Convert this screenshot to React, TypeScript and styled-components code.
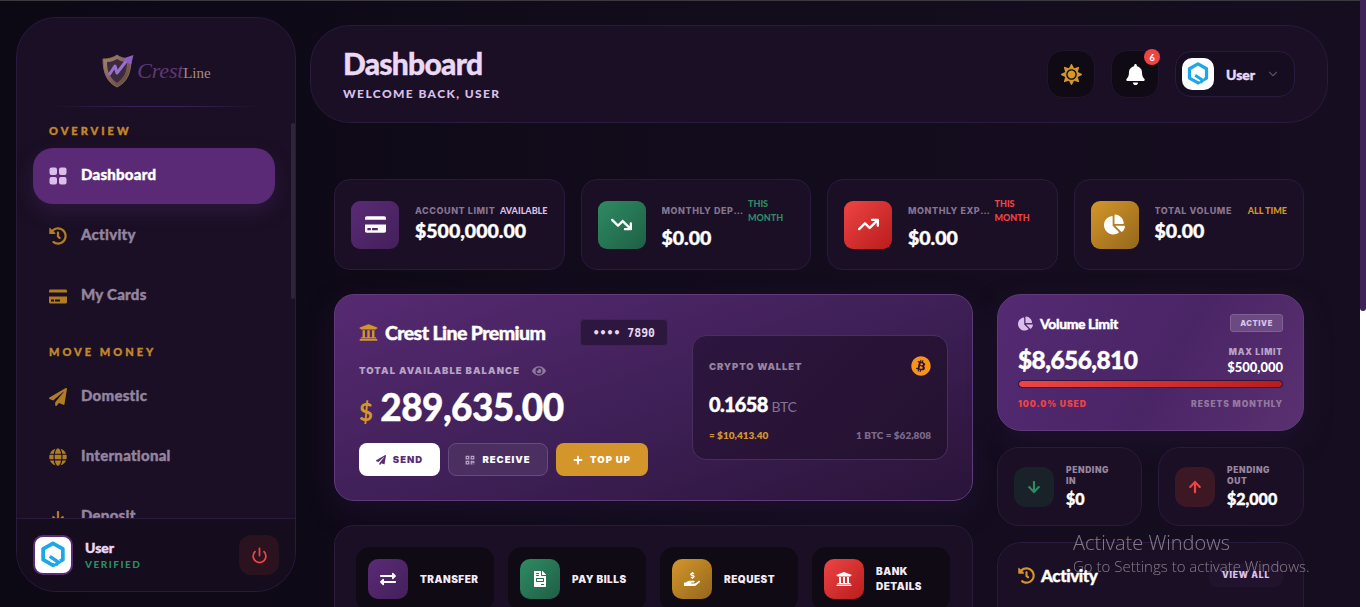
import React from "react";
import styled, { createGlobalStyle, css } from "styled-components";
import { ChevronDown, Power } from "lucide-react";
import {
  FaArrowDown,
  FaArrowUp,
  FaBell,
  FaBitcoin,
  FaChartPie,
  FaCreditCard,
  FaExchangeAlt,
  FaEye,
  FaFileInvoice,
  FaGlobe,
  FaHandHoldingUsd,
  FaHistory,
  FaPaperPlane,
  FaPlus,
  FaQrcode,
  FaSun,
  FaUniversity,
} from "react-icons/fa";
import { FaArrowTrendDown, FaArrowTrendUp } from "react-icons/fa6";

const FONT = `"Lato", "Inter", sans-serif`;
const WIDE = `"Inter", "Lato", sans-serif`;

const gold = "#d4962a";
const green = "#2e8b63";
const red = "#ef4444";
const purple = "#5b2a76";

const gradients: Record<string, string> = {
  purple: "linear-gradient(135deg, #5b2a76, #43205a)",
  green: "linear-gradient(135deg, #2e8b63, #1f5f45)",
  red: "linear-gradient(135deg, #ef4444, #b91c1c)",
  gold: "linear-gradient(135deg, #d4962a, #94671c)",
};

// The reference text is heavier than the installed fonts go
const heavy = css`
  -webkit-text-stroke: 0.4px currentColor;
`;

const GlobalStyle = createGlobalStyle`
  html, body {
    margin: 0;
    height: 100%;
    overflow: hidden;
    background: #0f0a18;
    font-family: ${FONT};
  }
  * { box-sizing: border-box; }
`;

const Page = styled.div`
  display: flex;
  height: 607px;
  padding-left: 16px;
  border-top: 1px solid #3b3b3f;
  background: linear-gradient(90deg, #0c0814 0%, #130c1d 60%, #160e20 100%);
  overflow: hidden;
`;

// Sidebar
const Sidebar = styled.aside`
  position: relative;
  flex: 0 0 280px;
  height: 575px;
  margin-top: 16px;
  display: flex;
  flex-direction: column;
  background: #1a0f24;
  border: 1px solid #2a1a3d;
  border-radius: 40px;
  overflow: hidden;
`;

const LogoArea = styled.div`
  flex: 0 0 90px;
  position: relative;
  display: flex;
  align-items: center;
  justify-content: center;
  padding: 16px 0 0 0;
  &::after {
    content: "";
    position: absolute;
    left: 32px;
    right: 32px;
    bottom: 1px;
    height: 1px;
    background: linear-gradient(90deg, transparent, #3d2257 40%, #3d2257 60%, transparent);
  }
`;

const LogoText = styled.span`
  font-family: "Liberation Serif", serif;
  font-size: 15px;
  line-height: 1;
  margin-left: 2px;
  color: #a98b7c;
`;

const LogoScript = styled.span`
  font-size: 22px;
  font-style: italic;
  color: #5d3a77;
  letter-spacing: -0.2px;
`;

const SideScroll = styled.div`
  position: absolute;
  top: 105px;
  right: 0;
  width: 4px;
  height: 176px;
  border-radius: 2px;
  background: #2f2439;
`;

const Nav = styled.nav`
  flex: 1;
  min-height: 0;
  overflow: hidden;
  padding: 16px 20px 0 16px;
`;

const SectionLabel = styled.div<{ $gap?: number }>`
  font-family: ${FONT};
  font-size: 11px;
  font-weight: 900;
  line-height: 14px;
  letter-spacing: 3px;
  color: ${gold};
  opacity: 0.9;
  padding-left: 16px;
  margin: ${(p) => p.$gap ?? 0}px 0 10px;
  ${heavy}
`;

const NavItem = styled.div<{ $active?: boolean }>`
  display: flex;
  align-items: center;
  gap: 14px;
  height: 56px;
  margin-bottom: 4px;
  padding-left: 16px;
  border-radius: 20px;
  font-size: 15px;
  font-weight: 900;
  letter-spacing: 0.25px;
  color: ${(p) => (p.$active ? "#ffffff" : "#93849f")};
  background: ${(p) => (p.$active ? purple : "transparent")};
  box-shadow: ${(p) => (p.$active ? "0 8px 20px rgba(91, 42, 118, 0.3)" : "none")};
  ${heavy}
`;

const NavLabel = styled.span`
  margin-top: -4px;
`;

const NavIcon = styled.span<{ $active?: boolean }>`
  display: flex;
  align-items: center;
  justify-content: center;
  width: 18px;
  font-size: 18px;
  color: ${(p) => (p.$active ? "#d9bfe9" : "#b07d24")};
`;

const SideFooter = styled.div`
  flex: 0 0 73px;
  display: flex;
  align-items: center;
  gap: 12px;
  padding: 0 16px;
  background: #150c1e;
  border-top: 1px solid #2a1a3d;
`;

const Avatar = styled.div<{ $ring?: boolean; $size: number }>`
  flex: 0 0 auto;
  display: flex;
  align-items: center;
  justify-content: center;
  width: ${(p) => p.$size}px;
  height: ${(p) => p.$size}px;
  border-radius: 10px;
  background: #fff;
  border: ${(p) => (p.$ring ? `2px solid ${purple}` : "none")};
`;

const FooterText = styled.div`
  flex: 1;
`;

const FooterName = styled.div`
  font-size: 14px;
  font-weight: 900;
  line-height: 18px;
  color: #ead9f5;
  ${heavy}
`;

const Verified = styled.div`
  font-size: 10px;
  font-weight: 900;
  line-height: 14px;
  letter-spacing: 1.5px;
  color: ${green};
`;

const PowerButton = styled.div`
  display: flex;
  align-items: center;
  justify-content: center;
  width: 40px;
  height: 40px;
  border-radius: 12px;
  color: ${red};
  background: #2a121f;
`;

// Main column
const Main = styled.main`
  flex: 0 0 1018px;
  margin-left: 14px;
  padding-top: 24px;
  min-width: 0;
`;

const Header = styled.header`
  display: flex;
  align-items: center;
  justify-content: space-between;
  height: 98px;
  padding: 0 32px;
  background: #1a0f24;
  border: 1px solid #2a1a3d;
  border-radius: 40px;
`;

const Title = styled.h1`
  margin: 0;
  font-family: ${FONT};
  font-size: 30px;
  font-weight: 900;
  line-height: 32px;
  letter-spacing: -0.75px;
  color: #ead9f5;
  ${heavy}
`;

const Subtitle = styled.div`
  margin-top: 7px;
  font-size: 12px;
  font-weight: 900;
  line-height: 16px;
  letter-spacing: 1.4px;
  color: #d9bfe9;
`;

const HeaderActions = styled.div`
  display: flex;
  align-items: center;
  gap: 16px;
`;

const RoundButton = styled.div<{ $color: string }>`
  position: relative;
  display: flex;
  align-items: center;
  justify-content: center;
  width: 48px;
  height: 48px;
  border-radius: 16px;
  font-size: 21px;
  color: ${(p) => p.$color};
  background: #0f0a14;
  border: 1px solid #21152e;
`;

const Badge = styled.span`
  position: absolute;
  top: -2px;
  right: -2px;
  display: flex;
  align-items: center;
  justify-content: center;
  width: 16px;
  height: 16px;
  border-radius: 50%;
  font-size: 9px;
  font-weight: 900;
  color: #fff;
  background: ${red};
`;

const UserPill = styled.div`
  display: flex;
  align-items: center;
  width: 120px;
  height: 46px;
  padding: 0 14px 0 6px;
  border: 1px solid #2a1a3d;
  border-radius: 16px;
  background: #170d20;
`;

const UserName = styled.span`
  flex: 1;
  margin-left: 12px;
  font-size: 14px;
  font-weight: 900;
  color: #ead9f5;
  ${heavy}
`;

const Content = styled.div`
  padding: 56px 24px 0;
`;

const StatsRow = styled.section`
  display: grid;
  grid-template-columns: repeat(4, 1fr);
  gap: 16px;
`;

const StatCard = styled.div`
  display: flex;
  align-items: center;
  gap: 16px;
  height: 91px;
  padding: 0 16px;
  background: #1a0f24;
  border: 1px solid #2a1a3d;
  border-radius: 16px;
  min-width: 0;
`;

const StatIcon = styled.div<{ $tone: string }>`
  flex: 0 0 48px;
  display: flex;
  align-items: center;
  justify-content: center;
  height: 48px;
  border-radius: 9px;
  font-size: 21px;
  color: #fff;
  background: ${(p) => gradients[p.$tone]};
`;

const StatBody = styled.div`
  flex: 1;
  min-width: 0;
  padding-bottom: 3px;
`;

const StatHead = styled.div`
  display: flex;
  align-items: center;
  justify-content: space-between;
  gap: 4px;
`;

const StatLabel = styled.span`
  min-width: 0;
  overflow: hidden;
  white-space: nowrap;
  text-overflow: ellipsis;
  font-family: ${WIDE};
  font-size: 9px;
  font-weight: 800;
  letter-spacing: 0.55px;
  color: #85748f;
`;

const StatTag = styled.span<{ $color: string; $wrap?: boolean }>`
  flex: ${(p) => (p.$wrap ? "0 0 46px" : "0 0 auto")};
  font-size: 9px;
  font-weight: 900;
  line-height: 14px;
  color: ${(p) => p.$color};
`;

const StatValue = styled.div`
  font-size: 19.5px;
  font-weight: 900;
  line-height: 24px;
  margin-top: 1px;
  color: #fff;
  ${heavy}
`;

const Columns = styled.section`
  display: grid;
  grid-template-columns: 639px 307px;
  gap: 24px;
  margin-top: 24px;
  align-items: start;
`;

const LeftColumn = styled.div`
  display: flex;
  flex-direction: column;
  gap: 24px;
`;

const RightColumn = styled.div`
  display: flex;
  flex-direction: column;
  gap: 16px;
`;

const Hero = styled.div`
  display: flex;
  align-items: center;
  gap: 24px;
  padding: 24px;
  border: 1px solid #5f3b7a;
  border-radius: 20px;
  background: linear-gradient(160deg, #572a72 0%, #3d1f55 55%, #2a1439 100%);
  box-shadow: 0 10px 30px rgba(60, 30, 90, 0.25);
`;

const HeroLeft = styled.div`
  flex: 0 0 309px;
`;

const HeroTop = styled.div`
  display: flex;
  align-items: center;
  justify-content: space-between;
  height: 27px;
`;

const HeroTitle = styled.div`
  display: flex;
  align-items: center;
  gap: 7px;
  font-size: 19.5px;
  font-weight: 900;
  letter-spacing: -0.6px;
  color: #fff;
  ${heavy}
  svg {
    font-size: 19px;
    color: ${gold};
  }
`;

const CardNumber = styled.div`
  display: flex;
  align-items: center;
  height: 27px;
  padding: 0 12px;
  border-radius: 4px;
  font-family: "DejaVu Sans Mono", monospace;
  font-size: 11.5px;
  font-weight: 700;
  white-space: pre;
  color: #e6d8ef;
  background: #2e173f;
  border: 1px solid #3e2553;
`;

const BalanceLabel = styled.div`
  display: flex;
  align-items: center;
  gap: 12px;
  margin-top: 17px;
  font-family: ${WIDE};
  font-size: 9.5px;
  font-weight: 900;
  line-height: 16px;
  letter-spacing: 1.05px;
  color: #b7a3c5;
  svg {
    font-size: 14px;
    color: #8e7a9e;
  }
`;

const Balance = styled.div`
  display: flex;
  align-items: baseline;
  gap: 8px;
  margin-top: 6px;
  font-size: 37px;
  font-weight: 900;
  line-height: 44px;
  letter-spacing: -0.6px;
  color: #fff;
  ${heavy}
`;

const Currency = styled.span`
  font-size: 24px;
  font-weight: 700;
  color: ${gold};
  -webkit-text-stroke: 0;
`;

const HeroButtons = styled.div`
  display: flex;
  gap: 8px;
  margin-top: 9px;
`;

const HeroButton = styled.div<{ $kind: "light" | "ghost" | "gold" }>`
  display: flex;
  align-items: center;
  justify-content: center;
  gap: 7px;
  width: ${(p) => ({ light: 81, ghost: 100, gold: 92 })[p.$kind]}px;
  height: 33px;
  border-radius: 8px;
  font-family: ${WIDE};
  font-size: 9.5px;
  font-weight: 900;
  letter-spacing: 1px;
  color: ${(p) => (p.$kind === "light" ? purple : "#fff")};
  background: ${(p) =>
    ({ light: "#fff", ghost: "#4c2f61", gold: gold })[p.$kind]};
  border: ${(p) => (p.$kind === "ghost" ? "1px solid #694a80" : "none")};
  svg {
    font-size: 10px;
  }
`;

const GhostIcon = styled.span`
  display: flex;
  color: #b7a3c5;
`;

const Wallet = styled.div`
  flex: 0 0 256px;
  height: 125px;
  padding: 21px 16px 0;
  border: 1px solid #47305c;
  border-radius: 14px;
  background: linear-gradient(135deg, #2d163f, #24112f);
`;

const WalletHead = styled.div`
  display: flex;
  align-items: center;
  justify-content: space-between;
  height: 18px;
  font-family: ${WIDE};
  font-size: 9.5px;
  font-weight: 900;
  letter-spacing: 0.85px;
  color: #95859f;
  svg {
    font-size: 20px;
    color: #f7931a;
  }
`;

const WalletAmount = styled.div`
  margin-top: 16px;
  font-size: 20px;
  font-weight: 900;
  line-height: 26px;
  letter-spacing: -0.7px;
  color: #fff;
  ${heavy}
  small {
    margin-left: 4px;
    font-size: 14px;
    font-weight: 400;
    letter-spacing: -0.4px;
    color: #83748e;
    -webkit-text-stroke: 0;
  }
`;

const WalletFoot = styled.div`
  display: flex;
  justify-content: space-between;
  margin-top: 8px;
  font-size: 10px;
  font-weight: 800;
  line-height: 14px;
`;

const ActionsCard = styled.div`
  display: grid;
  grid-template-columns: repeat(4, 138px);
  gap: 14px;
  padding: 21px;
  background: #1a0f24;
  border: 1px solid #2a1a3d;
  border-radius: 20px;
`;

const ActionTile = styled.div`
  display: flex;
  align-items: center;
  gap: 12px;
  height: 64px;
  padding: 0 12px;
  border-radius: 14px;
  background: #0f0a14;
`;

const ActionIcon = styled.div<{ $tone: string }>`
  flex: 0 0 40px;
  display: flex;
  align-items: center;
  justify-content: center;
  height: 40px;
  border-radius: 10px;
  font-size: 16px;
  color: #fff;
  background: ${(p) => gradients[p.$tone]};
`;

const ActionLabel = styled.span`
  font-family: ${WIDE};
  font-size: 10px;
  font-weight: 900;
  line-height: 15px;
  letter-spacing: 0.5px;
  color: #f3ecf8;
`;

const VolumeCard = styled.div`
  height: 137px;
  padding: 19px 20px 0;
  border: 1px solid #5f3b7a;
  border-radius: 24px;
  background: linear-gradient(120deg, #542a72 0%, #4a2566 55%, #5a3070 100%);
  box-shadow: 0 10px 30px rgba(60, 30, 90, 0.25);
`;

const VolumeHead = styled.div`
  display: flex;
  align-items: center;
  justify-content: space-between;
  height: 18px;
`;

const VolumeTitle = styled.div`
  display: flex;
  align-items: center;
  gap: 7px;
  font-size: 14px;
  font-weight: 900;
  letter-spacing: -0.4px;
  color: #fff;
  ${heavy}
  svg {
    font-size: 15px;
    color: #d9bfe9;
  }
`;

const ActiveTag = styled.span`
  display: flex;
  align-items: center;
  justify-content: center;
  width: 53px;
  height: 18px;
  border-radius: 3px;
  font-family: ${WIDE};
  font-size: 7.5px;
  font-weight: 900;
  letter-spacing: 0.6px;
  color: #d9bfe9;
  background: #6a4a80;
  border: 1px solid #7f6194;
`;

const VolumeMid = styled.div`
  display: flex;
  align-items: flex-end;
  justify-content: space-between;
  margin-top: 13px;
`;

const VolumeValue = styled.div`
  font-size: 24.5px;
  font-weight: 900;
  line-height: 30px;
  letter-spacing: -0.6px;
  color: #fff;
  ${heavy}
`;

const MaxLimit = styled.div`
  text-align: right;
  font-size: 13px;
  font-weight: 900;
  line-height: 15px;
  color: #fff;
  span {
    display: block;
    font-family: ${WIDE};
    font-size: 8.5px;
    font-weight: 900;
    letter-spacing: 0.8px;
    color: #b7a3c5;
  }
`;

const BarTrack = styled.div`
  height: 8px;
  margin-top: 5px;
  border-radius: 4px;
  border: 1px solid #2d1540;
  background: #2d1540;
  overflow: hidden;
`;

const BarFill = styled.div`
  height: 100%;
  background: linear-gradient(90deg, #ef4444, #b91c1c);
  border-radius: 4px;
`;

const VolumeFoot = styled.div`
  display: flex;
  justify-content: space-between;
  margin-top: 10px;
  font-family: ${WIDE};
  font-size: 8.5px;
  font-weight: 900;
  line-height: 12px;
  letter-spacing: 0.95px;
`;

const PendingRow = styled.div`
  display: grid;
  grid-template-columns: 145px 146px;
  gap: 16px;
`;

const PendingCard = styled.div`
  display: flex;
  align-items: center;
  gap: 12px;
  height: 79px;
  padding: 0 16px;
  background: #1a0f24;
  border: 1px solid #2a1a3d;
  border-radius: 22px;
`;

const PendingIcon = styled.div<{ $tone: "green" | "red" }>`
  flex: 0 0 40px;
  display: flex;
  align-items: center;
  justify-content: center;
  height: 40px;
  border-radius: 12px;
  font-size: 14px;
  color: ${(p) => (p.$tone === "green" ? green : red)};
  background: ${(p) => (p.$tone === "green" ? "#1a2229" : "#3c1825")};
`;

const PendingLabel = styled.div`
  font-family: ${WIDE};
  font-size: 8.5px;
  font-weight: 900;
  line-height: 11px;
  letter-spacing: 0.6px;
  color: #95859f;
`;

const PendingValue = styled.div`
  font-size: 16px;
  font-weight: 900;
  line-height: 20px;
  margin-top: 2px;
  color: #fff;
  ${heavy}
`;

const ActivityCard = styled.div`
  height: 120px;
  padding: 20px;
  background: #1a0f24;
  border: 1px solid #2a1a3d;
  border-radius: 24px;
`;

const ActivityHead = styled.div`
  display: flex;
  align-items: center;
  justify-content: space-between;
  height: 24px;
`;

const ActivityTitle = styled.div`
  display: flex;
  align-items: center;
  gap: 6px;
  font-size: 17px;
  font-weight: 900;
  letter-spacing: -0.4px;
  color: #fff;
  ${heavy}
  svg {
    font-size: 17px;
    color: ${gold};
  }
`;

const ViewAll = styled.div`
  display: flex;
  align-items: center;
  justify-content: center;
  width: 74px;
  height: 24px;
  border-radius: 8px;
  font-family: ${WIDE};
  font-size: 8.5px;
  font-weight: 900;
  letter-spacing: 0.8px;
  color: #d9bfe9;
  background: #21132d;
`;

const Rail = styled.div`
  position: fixed;
  top: 0;
  right: 0;
  bottom: 0;
  width: 6px;
  background: #ffffff;
`;

const RailThumb = styled.div`
  height: 311px;
  border-radius: 0 0 3px 3px;
  background: #3e2358;
`;

const Watermark = styled.div`
  position: fixed;
  left: 1073px;
  top: 529px;
  font-family: "Open Sans", sans-serif;
  font-weight: 300;
  color: rgba(255, 255, 255, 0.45);
  pointer-events: none;
  white-space: nowrap;
`;

const WatermarkTitle = styled.div`
  font-size: 20px;
  line-height: 27px;
`;

const WatermarkText = styled.div`
  font-size: 15px;
  line-height: 20px;
`;

// Drawings
const BrandMark = ({ size }: { size: number }) => (
  <svg width={size} height={size} viewBox="0 0 32 32" fill="none">
    <path
      d="M16 3.5 26.5 9.5V21L16 27 5.5 21V9.5Z"
      stroke="#1ea7e8"
      strokeWidth="4"
      strokeLinejoin="round"
    />
    <path d="M14.5 19.5 22 24.5" stroke="#fff" strokeWidth="6" />
    <path d="M12.5 17.5 21.5 23.5 19 27" stroke="#1ea7e8" strokeWidth="3.6" />
  </svg>
);

const GridIcon = () => (
  <svg width="18" height="18" viewBox="0 0 18 18" fill="currentColor">
    <rect x="0.5" y="0.5" width="7.5" height="7.5" rx="2" />
    <rect x="10" y="0.5" width="7.5" height="7.5" rx="2" />
    <rect x="0.5" y="10" width="7.5" height="7.5" rx="2" />
    <rect x="10" y="10" width="7.5" height="7.5" rx="2" />
  </svg>
);

const ShieldLogo = () => (
  <svg width="34" height="36" viewBox="0 0 34 36" fill="none">
    <defs>
      <linearGradient id="shield" x1="0" y1="0" x2="1" y2="1">
        <stop offset="0" stopColor="#a98672" />
        <stop offset="1" stopColor="#5a4038" />
      </linearGradient>
    </defs>
    <path d="M2 6C9 6 13 4 16 2 19 4 23 6 30 6 30 20 26 29 16 34 6 29 2 20 2 6Z" fill="url(#shield)" stroke="#8a6b5a" />
    <path d="M6 9C11 9 14 7 16 6 18 7 21 9 26 9 26 19 23 25 16 30 9 25 6 19 6 9Z" fill="#3c2a3e" />
    <path d="M8 22 14 13 16 20 26 7" stroke="#9a6fd0" strokeWidth="3" strokeLinejoin="round" />
    <path d="M22 5.5 32.5 2 30 12Z" fill="#8d5fc4" />
  </svg>
);

const nav = [
  { label: "Activity", icon: <FaHistory /> },
  { label: "My Cards", icon: <FaCreditCard size={21} /> },
];

const moveMoney = [
  { label: "Domestic", icon: <FaPaperPlane /> },
  { label: "International", icon: <FaGlobe /> },
  { label: "Deposit", icon: <FaArrowDown size={14} /> },
];

const stats = [
  { label: "ACCOUNT LIMIT", tag: "AVAILABLE", tagColor: "#d9bfe9", value: "$500,000.00", tone: "purple", icon: <FaCreditCard /> },
  { label: "MONTHLY DEPOSITS", tag: "THIS MONTH", tagColor: green, value: "$0.00", tone: "green", icon: <FaArrowTrendDown />, wrap: true },
  { label: "MONTHLY EXPENSES", tag: "THIS MONTH", tagColor: red, value: "$0.00", tone: "red", icon: <FaArrowTrendUp />, wrap: true },
  { label: "TOTAL VOLUME", tag: "ALL TIME", tagColor: gold, value: "$0.00", tone: "gold", icon: <FaChartPie /> },
];

const actions = [
  { label: "TRANSFER", tone: "purple", icon: <FaExchangeAlt /> },
  { label: "PAY BILLS", tone: "green", icon: <FaFileInvoice /> },
  { label: "REQUEST", tone: "gold", icon: <FaHandHoldingUsd /> },
  { label: "BANK DETAILS", tone: "red", icon: <FaUniversity /> },
];

export default function App() {
  return (
    <>
      <GlobalStyle />
      <Page>
        <Sidebar>
          <LogoArea>
            <ShieldLogo />
            <LogoText>
              <LogoScript>Crest</LogoScript>Line
            </LogoText>
          </LogoArea>
          <Nav>
            <SectionLabel>OVERVIEW</SectionLabel>
            <NavItem $active>
              <NavIcon $active>
                <GridIcon />
              </NavIcon>
              <NavLabel>Dashboard</NavLabel>
            </NavItem>
            {nav.map((item) => (
              <NavItem key={item.label}>
                <NavIcon>{item.icon}</NavIcon>
                <NavLabel>{item.label}</NavLabel>
              </NavItem>
            ))}
            <SectionLabel $gap={21}>MOVE MONEY</SectionLabel>
            {moveMoney.map((item) => (
              <NavItem key={item.label}>
                <NavIcon>{item.icon}</NavIcon>
                <NavLabel>{item.label}</NavLabel>
              </NavItem>
            ))}
          </Nav>
          <SideScroll />
          <SideFooter>
            <Avatar $ring $size={40}>
              <BrandMark size={30} />
            </Avatar>
            <FooterText>
              <FooterName>User</FooterName>
              <Verified>VERIFIED</Verified>
            </FooterText>
            <PowerButton>
              <Power size={17} strokeWidth={2.5} />
            </PowerButton>
          </SideFooter>
        </Sidebar>

        <Main>
          <Header>
            <div>
              <Title>Dashboard</Title>
              <Subtitle>WELCOME BACK, USER</Subtitle>
            </div>
            <HeaderActions>
              <RoundButton $color={gold}>
                <FaSun />
              </RoundButton>
              <RoundButton $color="#fff">
                <FaBell />
                <Badge>6</Badge>
              </RoundButton>
              <UserPill>
                <Avatar $size={32}>
                  <BrandMark size={26} />
                </Avatar>
                <UserName>User</UserName>
                <ChevronDown size={14} color="#5e4a6e" />
              </UserPill>
            </HeaderActions>
          </Header>

          <Content>
            <StatsRow>
              {stats.map((s) => (
                <StatCard key={s.label}>
                  <StatIcon $tone={s.tone}>{s.icon}</StatIcon>
                  <StatBody>
                    <StatHead>
                      <StatLabel>{s.label}</StatLabel>
                      <StatTag $color={s.tagColor} $wrap={s.wrap}>
                        {s.tag}
                      </StatTag>
                    </StatHead>
                    <StatValue>{s.value}</StatValue>
                  </StatBody>
                </StatCard>
              ))}
            </StatsRow>

            <Columns>
              <LeftColumn>
                <Hero>
                  <HeroLeft>
                    <HeroTop>
                      <HeroTitle>
                        <FaUniversity />
                        Crest Line Premium
                      </HeroTitle>
                      <CardNumber>{"•••• 7890"}</CardNumber>
                    </HeroTop>
                    <BalanceLabel>
                      TOTAL AVAILABLE BALANCE
                      <FaEye />
                    </BalanceLabel>
                    <Balance>
                      <Currency>$</Currency>
                      289,635.00
                    </Balance>
                    <HeroButtons>
                      <HeroButton $kind="light">
                        <FaPaperPlane />
                        SEND
                      </HeroButton>
                      <HeroButton $kind="ghost">
                        <GhostIcon>
                          <FaQrcode />
                        </GhostIcon>
                        RECEIVE
                      </HeroButton>
                      <HeroButton $kind="gold">
                        <FaPlus />
                        TOP UP
                      </HeroButton>
                    </HeroButtons>
                  </HeroLeft>
                  <Wallet>
                    <WalletHead>
                      CRYPTO WALLET
                      <FaBitcoin />
                    </WalletHead>
                    <WalletAmount>
                      0.1658<small>BTC</small>
                    </WalletAmount>
                    <WalletFoot>
                      <span style={{ color: gold }}>≈ $10,413.40</span>
                      <span style={{ color: "#7b6b88" }}>1 BTC = $62,808</span>
                    </WalletFoot>
                  </Wallet>
                </Hero>

                <ActionsCard>
                  {actions.map((a) => (
                    <ActionTile key={a.label}>
                      <ActionIcon $tone={a.tone}>{a.icon}</ActionIcon>
                      <ActionLabel>{a.label}</ActionLabel>
                    </ActionTile>
                  ))}
                </ActionsCard>
              </LeftColumn>

              <RightColumn>
                <VolumeCard>
                  <VolumeHead>
                    <VolumeTitle>
                      <FaChartPie />
                      Volume Limit
                    </VolumeTitle>
                    <ActiveTag>ACTIVE</ActiveTag>
                  </VolumeHead>
                  <VolumeMid>
                    <VolumeValue>$8,656,810</VolumeValue>
                    <MaxLimit>
                      <span>MAX LIMIT</span>
                      $500,000
                    </MaxLimit>
                  </VolumeMid>
                  <BarTrack>
                    <BarFill style={{ width: "100%" }} />
                  </BarTrack>
                  <VolumeFoot>
                    <span style={{ color: red }}>100.0% USED</span>
                    <span style={{ color: "#93789f" }}>RESETS MONTHLY</span>
                  </VolumeFoot>
                </VolumeCard>

                <PendingRow>
                  <PendingCard>
                    <PendingIcon $tone="green">
                      <FaArrowDown />
                    </PendingIcon>
                    <div>
                      <PendingLabel>
                        PENDING
                        <br />
                        IN
                      </PendingLabel>
                      <PendingValue>$0</PendingValue>
                    </div>
                  </PendingCard>
                  <PendingCard>
                    <PendingIcon $tone="red">
                      <FaArrowUp />
                    </PendingIcon>
                    <div>
                      <PendingLabel>
                        PENDING
                        <br />
                        OUT
                      </PendingLabel>
                      <PendingValue>$2,000</PendingValue>
                    </div>
                  </PendingCard>
                </PendingRow>

                <ActivityCard>
                  <ActivityHead>
                    <ActivityTitle>
                      <FaHistory />
                      Activity
                    </ActivityTitle>
                    <ViewAll>VIEW ALL</ViewAll>
                  </ActivityHead>
                </ActivityCard>
              </RightColumn>
            </Columns>
          </Content>
        </Main>
      </Page>
      <Rail>
        <RailThumb />
      </Rail>
      <Watermark>
        <WatermarkTitle>Activate Windows</WatermarkTitle>
        <WatermarkText>Go to Settings to activate Windows.</WatermarkText>
      </Watermark>
    </>
  );
}
